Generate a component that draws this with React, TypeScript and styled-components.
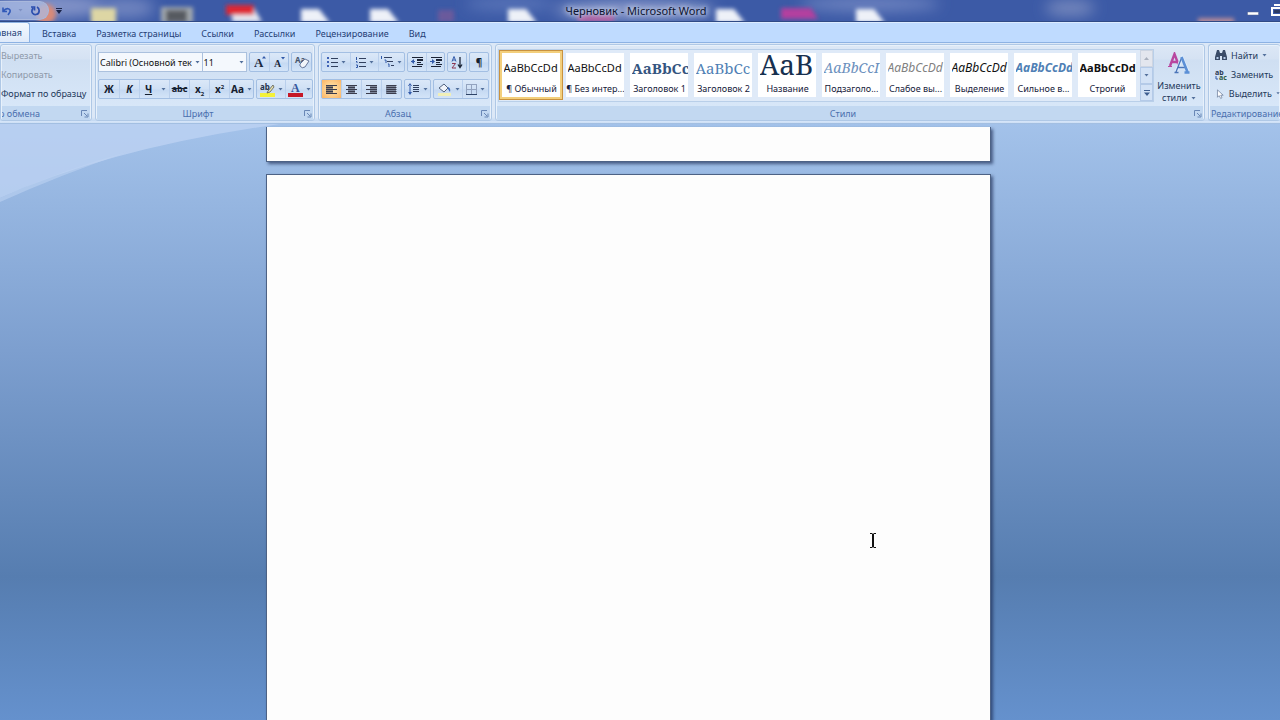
import React from "react";
import styled, { createGlobalStyle, css } from "styled-components";

const UI = `"Noto Sans", "Open Sans", sans-serif`;
const SERIF = `"Noto Serif", "DejaVu Serif", "Liberation Serif", serif`;

const Global = createGlobalStyle`
  * { box-sizing: border-box; }
  body { margin: 0; font: 9px/14px ${UI}; color: #1e395b; overflow: hidden; background: #7ea3d6; }
  button, input, select { font: inherit; color: inherit; margin: 0; }
`;

const Window = styled.div`
  min-height: 100vh;
  display: flex;
  flex-direction: column;
  overflow: hidden;
`;

/* Title bar */
const TitleBar = styled.header`
  position: relative;
  height: 21px;
  flex: none;
  display: flex;
  align-items: center;
  overflow: hidden;
  background: #3c5aa6;
`;
const Wallpaper = styled.svg`
  position: absolute;
  inset: 0;
  width: 100%;
  height: 100%;
`;
const QuickBar = styled.div`
  position: relative;
  flex: 1;
  display: flex;
  align-items: center;
`;
const QuickPill = styled.div`
  display: flex;
  align-items: center;
  width: 49px;
  height: 19px;
  border: 1px solid #a9b8dc;
  border-left: 0;
  border-radius: 0 10px 10px 0;
  background: rgba(170, 188, 228, 0.72);
`;
const IconButton = styled.button<{ $w?: number }>`
  display: inline-flex;
  align-items: center;
  justify-content: center;
  width: ${(p) => p.$w ?? 20}px;
  height: 100%;
  min-height: 16px;
  padding: 0;
  border: 0;
  background: none;
`;
const Title = styled.h1`
  position: relative;
  margin: 0 8px 0 0;
  font: 400 11px/22px ${UI};
  color: #0d1430;
  text-shadow: 0 0 5px #c6cfe8, 0 0 5px #c6cfe8, 0 0 8px #b4c0e0;
`;
const WindowButtons = styled.div`
  position: relative;
  flex: 1;
  display: flex;
  justify-content: flex-end;
`;

/* Tabs */
const Tabs = styled.nav`
  display: flex;
  align-items: stretch;
  flex: none;
  height: 21px;
  border-top: 1px solid #2f4a86;
  background: #bfdbff;
  box-shadow: inset 0 1px #dcebff;
`;
const Tab = styled.button<{ $active?: boolean }>`
  padding: 4px 10px 0;
  border: 0;
  background: none;
  color: #1f4076;
  white-space: nowrap;
  ${(p) =>
    p.$active &&
    css`
      display: flex;
      justify-content: flex-end;
      width: 30px;
      margin-right: 2px;
      padding: 3px 7px 0 0;
      overflow: hidden;
      border: 1px solid #8db2e3;
      border-left: 0;
      border-bottom: 0;
      border-radius: 0 3px 0 0;
      background: linear-gradient(#f3f9ff, #dfeafa);
    `}
`;

/* Ribbon */
const Ribbon = styled.section`
  display: flex;
  gap: 3px;
  flex: none;
  height: 82px;
  padding: 1px 0 3px;
  border-top: 1px solid #8db2e3;
  background: linear-gradient(#dce8f7 0 74px, #c3d8f2 78px, #e6f1ff 79px, #8caed8 81px);
`;
const Group = styled.div<{ $w?: number; $end?: boolean }>`
  display: flex;
  flex-direction: column;
  ${(p) => (p.$w ? `flex: none; width: ${p.$w}px;` : "flex: 1; min-width: 0;")}
  overflow: hidden;
  border: 1px solid #afc8e6;
  ${(p) => p.$end && "border-right: 0;"}
  border-radius: 3px;
  box-shadow: inset 0 0 0 1px #e8f1fb;
  background: linear-gradient(#dde8f6, #d5e2f3 14px, #cfdff2 15px, #dae9fa);
`;
const GroupBody = styled.div<{ $row?: boolean }>`
  flex: 1;
  display: flex;
  flex-direction: ${(p) => (p.$row ? "row" : "column")};
`;
const GroupLabel = styled.div<{ $clip?: boolean }>`
  display: flex;
  align-items: center;
  height: 14px;
  margin: 0 1px;
  padding: 1px 1px 0 0;
  background: #c2d8f1;
  color: #4a6fae;
  white-space: nowrap;
  > span {
    flex: 1;
    min-width: 0;
    overflow: hidden;
    display: flex;
    justify-content: ${(p) => (p.$clip ? "flex-end" : "center")};
    padding-right: ${(p) => (p.$clip ? 41 : 5)}px;
  }
`;

const ClipItems = styled.div`
  display: flex;
  flex-direction: column;
  padding-top: 1px;
`;
const TextItem = styled.button<{ $off?: boolean }>`
  display: flex;
  align-items: center;
  gap: 4px;
  height: 19px;
  padding: 0;
  border: 0;
  background: none;
  white-space: nowrap;
  color: ${(p) => (p.$off ? "#8e99a9" : "#1e395b")};
`;

const ToolRow = styled.div`
  display: flex;
  gap: 2px;
  height: 27px;
  padding: 7px 2px 0;
  &:first-child { height: 27px; padding-top: 7px; }
`;
const Cluster = styled.div`
  display: flex;
  height: 20px;
  border: 1px solid #a3bfe3;
  border-radius: 2px;
  background: linear-gradient(#dbe8f8, #cfe0f5 9px, #c5d9f2 10px, #d3e4f8);
`;
const Tool = styled.button<{ $w?: number; $on?: boolean; $sep?: boolean }>`
  display: flex;
  align-items: center;
  justify-content: center;
  gap: 3px;
  width: ${(p) => p.$w ?? 20}px;
  padding: 0;
  border: 0;
  border-left: ${(p) => (p.$sep ? "1px solid #b9cfec" : "0")};
  background: ${(p) => (p.$on ? "radial-gradient(#ffe9b4, #fbb565)" : "none")};
  color: #15202f;
  font: 700 10px/14px ${UI};
`;
const Combo = styled.div<{ $w: number }>`
  display: flex;
  align-items: center;
  width: ${(p) => p.$w}px;
  height: 20px;
  border: 1px solid #abc1de;
  background: #f4f8fd;
  & + & { margin-left: -3px; }
`;
const ComboInput = styled.input`
  flex: 1;
  min-width: 0;
  width: 0;
  height: 18px;
  padding: 0 1px;
  border: 0;
  background: none;
  color: #111;
`;

/* Style gallery */
const Gallery = styled.div`
  flex: 1;
  min-width: 0;
  display: flex;
  margin: 4px 0 4px 2px;
  border: 1px solid #b9cfe9;
  background: #dfeaf8;
`;
const Cards = styled.div`
  flex: 1;
  display: flex;
  min-width: 0;
  overflow: hidden;
`;
const Card = styled.button<{ $on?: boolean }>`
  flex: none;
  width: 64px;
  height: 50px;
  padding: 0 0 0 1px;
  border: 3px solid transparent;
  background: #fff padding-box;
  display: flex;
  flex-direction: column;
  align-items: center;
  overflow: hidden;
  color: #15203a;
  ${(p) =>
    p.$on &&
    css`
      border-color: #f3cf7c;
      outline: 1px solid #c9923f;
      outline-offset: -1px;
    `}
`;
const Sample = styled.span<{ $css: string }>`
  display: flex;
  align-items: center;
  height: 29px;
  width: 56px;
  overflow: hidden;
  white-space: nowrap;
  font: 400 11px/29px ${UI};
  color: #111;
  ${(p) => p.$css}
`;
const CardName = styled.span`
  height: 14px;
  line-height: 14px;
  white-space: nowrap;
`;
const Scroller = styled.div`
  display: flex;
  flex-direction: column;
  width: 13px;
  > button {
    flex: 1;
    width: 100%;
    border: 1px solid #b4cae8;
    background: #d3e2f6;
  }
  > button:first-child { background: #e3e6ee; border-color: #cdd5e2; }
`;
const ChangeStyles = styled.button`
  display: flex;
  flex-direction: column;
  align-items: center;
  width: 50px;
  padding: 7px 0 0;
  border: 0;
  background: none;
  line-height: 12px;
  color: #1e395b;
  > span { display: flex; align-items: center; gap: 4px; }
  > svg { margin-bottom: 6px; }
`;

/* Document */
const Workspace = styled.main`
  position: relative;
  flex: 1;
  display: flex;
  flex-direction: column;
  align-items: center;
  gap: 12px;
  padding: 3px 24px 0 0;
  background: linear-gradient(#a3c2ea, #7d9fcf 38%, #567db0 76%, #6591cd);
`;
const Swoosh = styled.svg`
  position: absolute;
  left: 0;
  top: 0;
`;
const Page = styled.article<{ $tail?: boolean }>`
  position: relative;
  width: 725px;
  border: 1px solid #4d6285;
  background: #fdfdfd;
  box-shadow: 2px 2px 3px rgba(25, 40, 80, 0.65);
  ${(p) => (p.$tail ? "height: 35px; border-top: 0;" : "flex: 1; min-height: 546px; border-bottom: 0;")}
`;
const Caret = styled.svg`
  position: absolute;
  left: 602px;
  top: 358px;
`;

/* Icons */
const Arrow = ({ c = "#53709c" }: { c?: string }) => (
  <svg width="5" height="3" viewBox="0 0 5 3"><path d="M.5 0h4L2.500 2.500z" fill={c} /></svg>
);
const Launcher = () => (
  <svg width="8" height="8" viewBox="0 0 8 8" fill="none" stroke="#6987b5">
    <path d="M.5 6V.5H6M3 3l3 3M7 3.500V7H3.500" />
  </svg>
);
const UndoIcon = () => (
  <svg width="10" height="10" viewBox="0 0 10 10" fill="none" stroke="#3159b8" strokeWidth="1.6">
    <path d="M1 1.500v4h4M1.500 5C4 1.500 9 2 8 6L6 9" />
  </svg>
);
const RedoIcon = () => (
  <svg width="11" height="11" viewBox="0 0 11 11" fill="none" stroke="#2d4fae" strokeWidth="1.700">
    <path d="M3 3C0 8 4 10 6 9.500 10 9 10 3.500 7 2M1 2h3.500v3.500" />
  </svg>
);
const ClearIcon = () => (
  <svg width="16" height="15" viewBox="0 0 16 15">
    <text x="1" y="8" fontSize="8" fontWeight="700" fill="#44536b" fontFamily="Noto Sans">Aa</text>
    <path d="M6 9l5-5 4 2-4 6q-3 2-5-1z" fill="#f2f5fa" stroke="#66779a" />
  </svg>
);
const Lines = ({ rows, c = "#31405e", h = 1 }: { rows: number[][]; c?: string; h?: number }) => (
  <g fill={c}>{rows.map(([x, y, w], i) => <rect key={i} x={x} y={y} width={w} height={h} />)}</g>
);
const BulletsIcon = ({ n }: { n?: boolean }) => (
  <svg width="11" height="11" viewBox="0 0 11 11">
    {n ? <path d="M1.500 0v3M1 4.500h1v1.500M1 8h1.500v2.500H1" stroke="#3159a8" fill="none" />
       : <path d="M0 0h2v2H0zM0 4h2v2H0zM0 8h2v2H0z" fill="#3f62b4" />}
    <Lines rows={[[4, 1, 7], [4, 5, 7], [4, 9, 7]]} />
  </svg>
);
const MultiIcon = () => (
  <svg width="13" height="12" viewBox="0 0 13 12">
    <path d="M.5 0v3M3.500 4h1.500v3M7 8h1v3" stroke="#3159a8" fill="none" />
    <Lines rows={[[3, 1, 8], [6, 5, 6], [10, 9, 3]]} />
  </svg>
);
const IndentIcon = ({ r }: { r?: boolean }) => (
  <svg width="12" height="10" viewBox="0 0 12 10">
    <Lines rows={[[1, 0, 11], [6, 2, 6], [6, 3, 6], [6, 5, 4], [6, 7, 6], [1, 9, 10]]} c="#1c2436" />
    <path d={r ? "M5 4.500L2 2v5z" : "M0 4.500L3 2v5z"} fill="#3159a8" />
    <path d="M0 4.500h4" stroke="#3159a8" />
  </svg>
);
const SortIcon = () => (
  <svg width="12" height="13" viewBox="0 0 12 13">
    <path d="M1 5.500L3 0.500L5 5.500M2 4h2" stroke="#3159a8" fill="none" />
    <path d="M1 7.500h3.500L1 12h4" stroke="#8c3552" fill="none" />
    <path d="M9 1v10M7 8.500l2 3 2-3" stroke="#1c2436" fill="none" strokeWidth="1.300" />
  </svg>
);
const AlignIcon = ({ k }: { k: "l" | "c" | "r" | "j" }) => {
  const ws = k === "j" ? [10, 10, 10, 10, 10] : [11, 7, 11, 7, 11];
  return (
    <svg width="11" height="9" viewBox="0 0 11 9">
      <Lines c="#3a3c4c" rows={ws.map((w, i) => [k === "l" ? 0 : k === "r" ? 11 - w : (11 - w) / 2, i * 2, w])} />
      <rect x={k === "l" ? 0 : k === "r" ? 4 : k === "c" ? 2 : 0} width={k === "j" ? 10 : 7} height="9" fill="#3a3c4c" opacity=".55" />
    </svg>
  );
};
const SpacingIcon = () => (
  <svg width="12" height="12" viewBox="0 0 12 12">
    <path d="M2 0L0 3h4zM2 12L0 9h4zM1.500 2h1v8h-1z" fill="#3159a8" />
    <Lines rows={[[5, 2, 6], [5, 4, 6], [5, 6, 6], [5, 8, 6]]} />
  </svg>
);
const FillIcon = () => (
  <svg width="15" height="13" viewBox="0 0 15 13">
    <path d="M2 5l5-4 4 4-4 4z" fill="#f1f4fa" stroke="#52637f" />
    <path d="M11 4q3 1 2 5l-2-3z" fill="#3c69b9" />
    <rect x="1" y="10" width="13" height="3" fill="#f0efb8" />
  </svg>
);
const BordersIcon = () => (
  <svg width="11" height="11" viewBox="0 0 11 11" fill="none" stroke="#93a3bf">
    <path d="M.5 0v10M5.500 0v10M10.500 0v10M0 .5h11M0 5.500h11" />
    <path d="M0 10.500h11" stroke="#2e4468" />
  </svg>
);
const HighlightIcon = () => (
  <svg width="15" height="15" viewBox="0 0 15 15">
    <rect x="0" y="11" width="15" height="4" fill="#f4f13a" />
    <text x="0" y="8" fontSize="8" fontWeight="700" fill="#26324a" fontFamily="Noto Sans">ab</text>
    <path d="M13 3L8 9l-1 2 3-1 4-5z" fill="#e8e2b0" stroke="#5a5b50" strokeWidth=".8" />
  </svg>
);
const ColorIcon = () => (
  <svg width="15" height="15" viewBox="0 0 15 15">
    <rect x="0" y="11" width="15" height="4" fill="#c51828" />
    <text x="3" y="10" fontSize="12" fontWeight="700" fill="#34569c" fontFamily="Liberation Serif">A</text>
  </svg>
);
const StylesIcon = () => (
  <svg width="22" height="22" viewBox="0 0 22 22" fill="none">
    <path d="M2 14L6.500 2L11 14M3.500 10h6" stroke="#b8479f" strokeWidth="2.400" />
    <path d="M0 14.500h4" stroke="#b8479f" />
    <path d="M8 20L14 6L20 20M10 15.500h8" stroke="#dcebfb" strokeWidth="3.500" />
    <path d="M8 20L13.500 6M10 15.500h8M6.500 20.500h4" stroke="#4a74b8" strokeWidth="1.300" />
    <path d="M13.500 5L19.500 20M16.500 20.500h5" stroke="#5b8fd6" strokeWidth="2.600" />
  </svg>
);
const FindIcon = () => (
  <svg width="12" height="11" viewBox="0 0 12 11" fill="#3b4c68">
    <path d="M2 0h2l1 3h2l1-3h2l2 7v3H7V6H5v4H0V7z" />
    <path d="M1.500 7h2v2h-2zM8.500 7h2v2h-2z" fill="#b9cdea" />
  </svg>
);
const ReplaceIcon = () => (
  <svg width="12" height="12" viewBox="0 0 12 12" fontFamily="Noto Sans" fontWeight="700">
    <text x="0" y="6" fontSize="7" fill="#2c3a55">ab</text>
    <text x="4" y="11" fontSize="7" fill="#2f5b45">ac</text>
    <path d="M1 7v3h2" stroke="#3159a8" fill="none" />
  </svg>
);
const SelectIcon = () => (
  <svg width="12" height="12" viewBox="0 0 12 12">
    <path d="M3 1v9l2-2 2 3.500 1.500-1L7 7.500h3z" fill="#fff" stroke="#5b6d8c" strokeWidth=".8" />
  </svg>
);

const TABS = ["Вставка", "Разметка страницы", "Ссылки", "Рассылки", "Рецензирование", "Вид"];

const STYLES: [string, string, string][] = [
  ["AaBbCcDd", "¶ Обычный", ""],
  ["AaBbCcDd", "¶ Без интер...", ""],
  ["AaBbCc", "Заголовок 1", `font: 700 15px ${SERIF}; color: #35557f;`],
  ["AaBbCc", "Заголовок 2", `font: 400 15px ${SERIF}; color: #4f7fb5;`],
  ["AaB", "Название", `font: 400 28px/22px ${SERIF}; align-items: flex-start; color: #17304f;`],
  ["AaBbCcI", "Подзаголо...", `font: italic 400 14px ${SERIF}; color: #6b90bd;`],
  ["AaBbCcDd", "Слабое вы...", "font-size: 12px; font-style: italic; color: #808080;"],
  ["AaBbCcDd", "Выделение", "font-size: 12px; font-style: italic;"],
  ["AaBbCcDd", "Сильное в...", "font-size: 12px; font-style: italic; font-weight: 700; color: #4f7fb5;"],
  ["AaBbCcDd", "Строгий", "font-weight: 700;"],
];

const Desktop = () => (
  <Wallpaper viewBox="0 0 1280 21" preserveAspectRatio="xMinYMid slice" aria-hidden>
    <defs>
      <filter id="soft" x="-20%" y="-50%" width="140%" height="200%"><feGaussianBlur stdDeviation="2" /></filter>
      <filter id="haze" x="-50%" y="-100%" width="200%" height="300%"><feGaussianBlur stdDeviation="7" /></filter>
    </defs>
    <g filter="url(#haze)">
      <ellipse cx="50" cy="6" rx="60" ry="12" fill="#8293c8" />
      <ellipse cx="125" cy="8" rx="30" ry="10" fill="#7185c0" />
      <ellipse cx="510" cy="4" rx="45" ry="6" fill="#5d78bb" />
      <ellipse cx="635" cy="10" rx="80" ry="9" fill="#8e9dcc" />
      <ellipse cx="870" cy="4" rx="70" ry="7" fill="#7186c2" />
      <ellipse cx="1070" cy="8" rx="25" ry="8" fill="#7688bd" />
    </g>
    <g filter="url(#soft)">
      <circle cx="46" cy="14" r="10" fill="#d98a78" />
      <rect x="91" y="8" width="25" height="16" fill="#ddd6a4" />
      <rect x="161" y="7" width="32" height="16" fill="#a3a9ae" />
      <rect x="166" y="10" width="21" height="12" fill="#565a60" />
      <path d="M232 8h22l8 14h-30z" fill="#e6e9f2" />
      <rect x="226" y="5" width="28" height="10" fill="#df2732" />
      {[301, 370, 508, 716, 856].map((x) => <path key={x} d={`M${x} 9h18l11 14h-29z`} fill="#eef1f8" />)}
      <rect x="438" y="10" width="16" height="12" fill="#6a5a9c" />
      <rect x="578" y="14" width="36" height="8" fill="#b05b9f" />
      <path d="M781 8h30l7 11h-37z" fill="#b33f9f" />
      <rect x="1198" y="18" width="36" height="7" fill="#b58a98" />
    </g>
  </Wallpaper>
);

export default function App() {
  return (
    <>
      <Global />
      <Window>
        <TitleBar>
          <Desktop />
          <QuickBar>
            <QuickPill>
              <IconButton $w={14} aria-label="Отменить"><UndoIcon /></IconButton>
              <IconButton $w={12} aria-label="Список отмены"><Arrow c="#7f92c4" /></IconButton>
              <IconButton $w={18} aria-label="Повторить"><RedoIcon /></IconButton>
            </QuickPill>
            <IconButton $w={19} aria-label="Настройка панели">
              <svg width="6" height="6" viewBox="0 0 6 6"><path d="M0 0h6v1H0zM0 2h6L3 6z" fill="#1a2448" /></svg>
            </IconButton>
          </QuickBar>
          <Title>Черновик - Microsoft Word</Title>
          <WindowButtons>
            <IconButton $w={31} aria-label="Свернуть">
              <svg width="12" height="12" viewBox="0 0 12 12"><rect y="7" x=".5" width="11" height="3" fill="#fff" stroke="#55658f" strokeWidth=".5" /></svg>
            </IconButton>
            <IconButton $w={12} aria-label="Развернуть">
              <svg width="12" height="14" viewBox="0 0 12 14" fill="none" stroke="#fff" strokeWidth="2"><path d="M7 2V1h8M4 4h10v7H4z" /><path d="M6.500 6.500h5v2h-5z" fill="#2c3a63" stroke="#2c3a63" strokeWidth="1" /></svg>
            </IconButton>
          </WindowButtons>
        </TitleBar>

        <Tabs>
          <Tab $active>Главная</Tab>
          {TABS.map((t) => <Tab key={t}>{t}</Tab>)}
        </Tabs>

        <Ribbon>
          <Group $w={92}>
            <GroupBody>
              <ClipItems>
                <TextItem $off>Вырезать</TextItem>
                <TextItem $off>Копировать</TextItem>
                <TextItem>Формат по образцу</TextItem>
              </ClipItems>
            </GroupBody>
            <GroupLabel $clip><span>Буфер обмена</span><Launcher /></GroupLabel>
          </Group>

          <Group $w={220}>
            <GroupBody>
              <ToolRow>
                <Combo $w={106}>
                  <ComboInput aria-label="Шрифт" defaultValue="Calibri (Основной тек" />
                  <IconButton $w={9} aria-label="Список шрифтов"><Arrow /></IconButton>
                </Combo>
                <Combo $w={46}>
                  <ComboInput aria-label="Размер шрифта" defaultValue="11" />
                  <IconButton $w={9} aria-label="Список размеров"><Arrow /></IconButton>
                </Combo>
                <Cluster>
                  <Tool $w={19} aria-label="Увеличить размер">
                    <svg width="12" height="12" viewBox="0 0 12 12"><text x="0" y="11" fontSize="13" fontWeight="700" fontFamily="Liberation Serif" fill="#1d2a40">A</text><path d="M8 2.500L10 0l2 2.500z" fill="#3159a8" /></svg>
                  </Tool>
                  <Tool $w={19} $sep aria-label="Уменьшить размер">
                    <svg width="12" height="12" viewBox="0 0 12 12"><text x="1" y="11" fontSize="10" fontWeight="700" fontFamily="Liberation Serif" fill="#1d2a40">A</text><path d="M8 1L10 3.500l2-2.500z" fill="#3159a8" /></svg>
                  </Tool>
                </Cluster>
                <Cluster><Tool $w={19} aria-label="Очистить формат"><ClearIcon /></Tool></Cluster>
              </ToolRow>
              <ToolRow>
                <Cluster>
                  <Tool $w={20}>Ж</Tool>
                  <Tool $w={20} $sep><i>К</i></Tool>
                  <Tool $w={18} $sep><u>Ч</u></Tool>
                  <Tool $w={12} aria-label="Вид подчёркивания"><Arrow /></Tool>
                  <Tool $w={20} $sep><Small>abc</Small></Tool>
                  <Tool $w={20} $sep><span>x<Sub>2</Sub></span></Tool>
                  <Tool $w={20} $sep><span>x<Sub as="sup">2</Sub></span></Tool>
                  <Tool $w={24} $sep>Aa<Arrow /></Tool>
                </Cluster>
                <Cluster>
                  <Tool $w={28} aria-label="Выделение цветом"><HighlightIcon /><Arrow /></Tool>
                  <Tool $w={27} $sep aria-label="Цвет текста"><ColorIcon /><Arrow /></Tool>
                </Cluster>
              </ToolRow>
            </GroupBody>
            <GroupLabel><span>Шрифт</span><Launcher /></GroupLabel>
          </Group>

          <Group $w={174}>
            <GroupBody>
              <ToolRow>
                <Cluster>
                  <Tool $w={28} aria-label="Маркеры"><BulletsIcon /><Arrow /></Tool>
                  <Tool $w={28} $sep aria-label="Нумерация"><BulletsIcon n /><Arrow /></Tool>
                  <Tool $w={26} $sep aria-label="Многоуровневый список"><MultiIcon /><Arrow /></Tool>
                </Cluster>
                <Cluster>
                  <Tool $w={18} aria-label="Уменьшить отступ"><IndentIcon /></Tool>
                  <Tool $w={18} $sep aria-label="Увеличить отступ"><IndentIcon r /></Tool>
                </Cluster>
                <Cluster><Tool $w={18} aria-label="Сортировка"><SortIcon /></Tool></Cluster>
                <Cluster><Tool $w={18} aria-label="Знаки">¶</Tool></Cluster>
              </ToolRow>
              <ToolRow>
                <Cluster>
                  <Tool $w={19} $on aria-label="По левому краю"><AlignIcon k="l" /></Tool>
                  <Tool $w={20} $sep aria-label="По центру"><AlignIcon k="c" /></Tool>
                  <Tool $w={20} $sep aria-label="По правому краю"><AlignIcon k="r" /></Tool>
                  <Tool $w={20} $sep aria-label="По ширине"><AlignIcon k="j" /></Tool>
                </Cluster>
                <Cluster><Tool $w={25} aria-label="Интервал"><SpacingIcon /><Arrow /></Tool></Cluster>
                <Cluster>
                  <Tool $w={28} aria-label="Заливка"><FillIcon /><Arrow /></Tool>
                  <Tool $w={26} $sep aria-label="Границы"><BordersIcon /><Arrow /></Tool>
                </Cluster>
              </ToolRow>
            </GroupBody>
            <GroupLabel><span>Абзац</span><Launcher /></GroupLabel>
          </Group>

          <Group>
            <GroupBody $row>
              <Gallery>
                <Cards>
                  {STYLES.map(([s, n, c], i) => (
                    <Card key={n} $on={i === 0}><Sample $css={c}>{s}</Sample><CardName>{n}</CardName></Card>
                  ))}
                </Cards>
                <Scroller>
                  <IconButton aria-label="Вверх"><svg width="5" height="3" viewBox="0 0 5 3"><path d="M0 3h5L2.500 0z" fill="#a9b0be" /></svg></IconButton>
                  <IconButton aria-label="Вниз"><Arrow /></IconButton>
                  <IconButton aria-label="Все стили"><svg width="6" height="6" viewBox="0 0 6 6"><path d="M0 0h6v1H0zM0 2.500h6L3 6z" fill="#3f5e90" /></svg></IconButton>
                </Scroller>
              </Gallery>
              <ChangeStyles><StylesIcon /><span>Изменить</span><span>стили <Arrow /></span></ChangeStyles>
            </GroupBody>
            <GroupLabel><span>Стили</span><Launcher /></GroupLabel>
          </Group>

          <Group $w={72} $end>
            <GroupBody>
              <EditItems>
                <TextItem><FindIcon />Найти <Arrow /></TextItem>
                <TextItem><ReplaceIcon />Заменить</TextItem>
                <TextItem><SelectIcon />Выделить <Arrow /></TextItem>
              </EditItems>
            </GroupBody>
            <EditLabel>Редактирование</EditLabel>
          </Group>
        </Ribbon>

        <Workspace>
          <Swoosh width="280" height="80" viewBox="0 0 280 80">
            <path d="M0 0H280Q110 24 0 74z" fill="#bdd2f2" opacity=".8" />
            <path d="M0 74Q60 46 130 27Q60 51 0 78z" fill="#bdd2f2" opacity=".6" />
          </Swoosh>
          <Page $tail />
          <Page>
            <Caret width="8" height="15" viewBox="0 0 8 15" fill="none" stroke="#111">
              <path d="M1 .5h2.500M4.500 .5H7M1 14.500h2.500M4.500 14.500H7" />
              <path d="M4 1v13" strokeWidth="2" />
            </Caret>
          </Page>
        </Workspace>
      </Window>
    </>
  );
}

const Small = styled.s`
  font-size: 9px;
`;
const Sub = styled.sub`
  font-size: 6px;
  line-height: 1;
`;
const EditItems = styled(ClipItems)`
  padding-left: 6px;
`;
const EditLabel = styled(GroupLabel)`
  padding: 1px 1px 0;
`;
